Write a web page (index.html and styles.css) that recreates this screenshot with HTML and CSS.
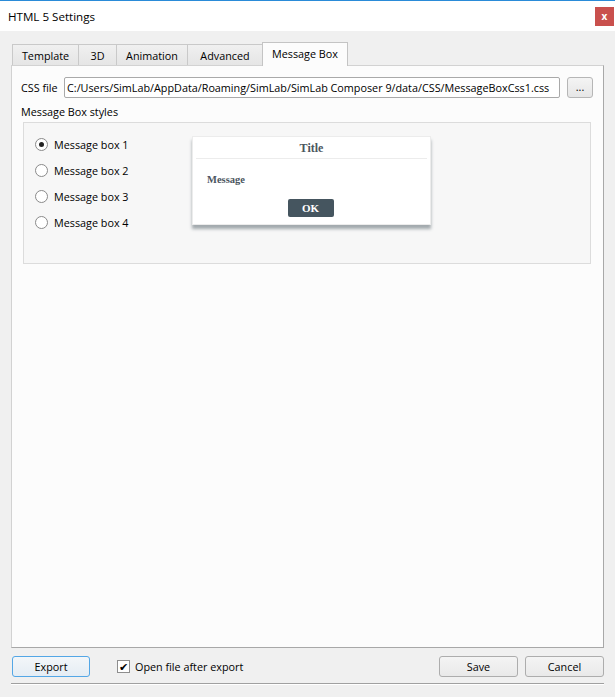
FILE: index.html
```html
<!DOCTYPE html>
<html>
<head>
<meta charset="utf-8">
<link rel="stylesheet" href="styles.css">
</head>
<body>
<div class="window">
  <div class="titlebar">
    <span class="title">HTML 5 Settings</span>
    <span class="close">x</span>
  </div>
  <div class="client">
    <div class="tabs">
      <div class="tab w-template">Template</div>
      <div class="tab w-3d">3D</div>
      <div class="tab w-anim">Animation</div>
      <div class="tab w-adv">Advanced</div>
      <div class="tab active w-msg">Message Box</div>
    </div>
    <div class="pane">
      <div class="css-row">
        <span class="label">CSS file</span>
        <div class="input">C:/Users/SimLab/AppData/Roaming/SimLab/SimLab Composer 9/data/CSS/MessageBoxCss1.css</div>
        <div class="browse">...</div>
      </div>
      <div class="section-label">Message Box styles</div>
      <div class="group">
        <div class="radios">
          <div class="radio-row"><span class="radio checked"></span><span>Message box 1</span></div>
          <div class="radio-row"><span class="radio"></span><span>Message box 2</span></div>
          <div class="radio-row"><span class="radio"></span><span>Message box 3</span></div>
          <div class="radio-row"><span class="radio"></span><span>Message box 4</span></div>
        </div>
        <div class="preview">
          <div class="pv-title">Title</div>
          <div class="pv-divider"></div>
          <div class="pv-message">Message</div>
          <div class="pv-actions"><span class="pv-ok">OK</span></div>
        </div>
      </div>
    </div>
    <div class="footer">
      <div class="btn export">Export</div>
      <div class="check-wrap"><span class="checkbox">&#10004;</span><span>Open file after export</span></div>
      <div class="spacer"></div>
      <div class="btn">Save</div>
      <div class="btn">Cancel</div>
    </div>
    <div class="bottom-line"></div>
  </div>
</div>
</body>
</html>
```
FILE: styles.css
```css
* { box-sizing: border-box; }
html, body { margin: 0; padding: 0; }
body {
  width: 615px;
  height: 697px;
  overflow: hidden;
  font-family: "Open Sans", "Noto Sans", sans-serif;
  font-size: 10.8px;
  color: #000;
  background: #f0f0f0;
}
.window { width: 615px; height: 697px; display: flex; flex-direction: column; }
.titlebar {
  height: 31px;
  background: #fff;
  border-top: 1px solid #2a8bd8;
  display: flex;
  align-items: center;
  padding-left: 8px;
}
.title { font-size: 11.6px; flex: 1; margin-top: 1px; }
.close {
  width: 19px;
  height: 19px;
  margin-right: 1px;
  background: #c9504d;
  color: #fff;
  font-weight: bold;
  font-size: 10px;
  display: flex;
  align-items: center;
  justify-content: center;
  line-height: 1;
}
.client { flex: 1; padding: 11px 11px 0 11px; display: flex; flex-direction: column; }
.tabs { display: flex; align-items: flex-end; height: 23px; padding-left: 1px; position: relative; z-index: 1; }
.tab {
  height: 21px;
  background: linear-gradient(#f0f0f0, #e5e5e5);
  border: 1px solid #c9c9c9;
  border-bottom: none;
  margin-right: -1px;
  display: flex;
  align-items: center;
  justify-content: center;
  padding-top: 1px;
}
.tab.active {
  height: 24px;
  background: #fcfcfc;
  margin-bottom: -1px;
  border-color: #c4c4c4;
  padding-top: 0;
  padding-bottom: 2px;
}
.w-template { width: 67px; }
.w-3d { width: 39px; }
.w-anim { width: 72px; }
.w-adv { width: 76px; }
.w-msg { width: 86px; }
.pane {
  height: 583px;
  background: #fcfcfc;
  border: 1px solid #d2d2d2;
  border-right-color: #a8a8a8;
  border-bottom-color: #a8a8a8;
  padding: 11px 11px 0 9px;
}
.css-row { display: flex; align-items: center; height: 21px; }
.label { width: 43px; }
.input {
  flex: 1;
  height: 21px;
  background: #fff;
  border: 1px solid #a9a9a9;
  border-radius: 2px;
  padding-left: 2px;
  display: flex;
  align-items: center;
  white-space: nowrap;
  overflow: hidden;
}
.browse {
  width: 26px;
  height: 21px;
  margin-left: 7px;
  margin-right: -1px;
  border: 1px solid #b6b6b6;
  border-radius: 3px;
  background: linear-gradient(#f4f4f4, #e6e6e6);
  display: flex;
  align-items: center;
  justify-content: center;
  padding-bottom: 3px;
}
.section-label { margin-top: 6px; height: 18px; line-height: 16px; }
.group {
  height: 142px;
  margin-left: 2px;
  margin-right: 1px;
  background: #f7f7f7;
  border: 1px solid #dcdcdc;
  padding: 8px 0 0 11px;
  display: flex;
  align-items: flex-start;
}
.radios { width: 157px; display: flex; flex-direction: column; }
.radio-row { height: 26px; display: flex; align-items: center; }
.radio {
  width: 13px;
  height: 13px;
  border-radius: 50%;
  border: 1px solid #8a8a8a;
  background: #fff;
  margin-right: 6px;
  display: flex;
  align-items: center;
  justify-content: center;
}
.radio.checked::after {
  content: "";
  width: 5px;
  height: 5px;
  border-radius: 50%;
  background: #222;
}
.preview {
  margin-top: 5px;
  width: 239px;
  height: 89px;
  background: #fff;
  border: 1px solid #ececec;
  box-shadow: 0 4px 3px rgba(60, 75, 85, 0.45);
  display: flex;
  flex-direction: column;
  font-family: "Liberation Serif", "Times New Roman", serif;
  font-weight: bold;
  color: #4c5660;
}
.pv-title { height: 21px; padding-top: 2px; display: flex; align-items: center; justify-content: center; font-size: 12px; }
.pv-divider { height: 1px; background: #ececec; margin: 0 3px; }
.pv-message { height: 40px; padding-left: 14px; display: flex; align-items: center; font-size: 10.5px; }
.pv-actions { display: flex; justify-content: center; padding-right: 2px; }
.pv-ok {
  width: 46px;
  height: 18px;
  background: #45555f;
  color: #fff;
  border-radius: 2px;
  font-size: 11px;
  display: flex;
  align-items: center;
  justify-content: center;
}
.footer {
  margin-top: 8px;
  height: 20px;
  display: flex;
  align-items: center;
  padding-left: 1px;
}
.btn {
  width: 79px;
  height: 21px;
  border: 1px solid #adadad;
  border-radius: 3px;
  background: linear-gradient(#f4f4f4, #e9e9e9);
  display: flex;
  align-items: center;
  justify-content: center;
  margin-left: 7px;
}
.btn.export {
  width: 78px;
  margin-left: 0;
  border-color: #54a7e6;
  background: linear-gradient(#f3f6f9, #e5edf4);
}
.check-wrap { display: flex; align-items: center; margin-left: 27px; }
.checkbox {
  width: 13px;
  height: 13px;
  border: 1px solid #8e8e8e;
  background: #fff;
  margin-right: 5px;
  font-size: 11px;
  line-height: 11px;
  display: flex;
  align-items: center;
  justify-content: center;
}
.spacer { flex: 1; }
.bottom-line {
  margin-top: 7px;
  height: 2px;
  border-top: 1px solid #a0a0a0;
  border-bottom: 1px solid #fff;
}
```
